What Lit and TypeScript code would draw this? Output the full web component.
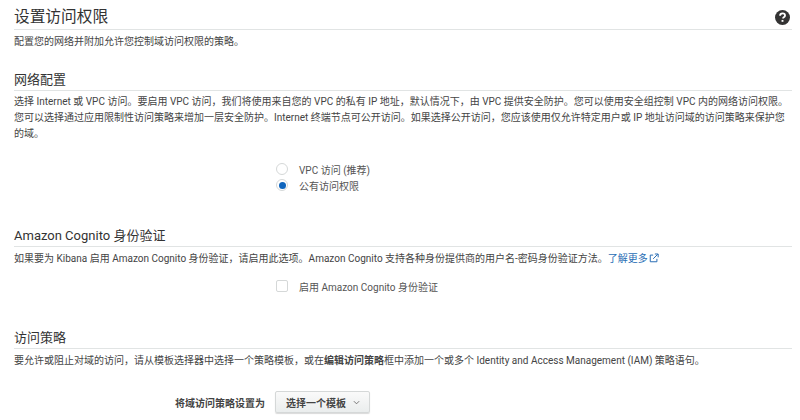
import { LitElement, html, css } from "lit";
import { customElement } from "lit/decorators.js";

@customElement("app-root")
export class AppRoot extends LitElement {
  static styles = css`
    :host { display: block; width: 800px; height: 420px; overflow: hidden; background: #fff; color: #444;
      font-family: Roboto, "Noto Sans CJK SC", sans-serif; font-size: 10px; }
    .page { padding: 0 8px 0 14px; }
    .head { display: flex; justify-content: space-between; align-items: center; border-bottom: 1px solid #e1e4e4; padding-top: 5px; box-sizing: border-box; height: 30px; }
    h1 { margin: 0; font-size: 15.7px; font-weight: 400; color: #333; line-height: 24px; }
    .help { width: 15px; height: 15px; margin-right: 2px; display: block; }
    p { margin: 0; line-height: 16px; color: #444; }
    .intro { margin-top: 4px; height: 15px; }
    h2 { margin: 0; font-size: 13px; font-weight: 400; color: #333; line-height: 20px; padding-top: 1px; border-bottom: 1px solid #e1e4e4; }
    .net { margin-top: 20px; }
    .net p { margin-top: 3px; margin-bottom: -1px; }
    .options { margin: 20px 0 0 261px; display: flex; flex-direction: column; }
    .opt { display: flex; align-items: center; height: 16px; gap: 11px; color: #555; }
    .radio { width: 12px; height: 12px; box-sizing: border-box; border-radius: 50%; border: 1px solid #d5d8d8; background: #fff; display: flex; align-items: center; justify-content: center; margin-left: 1px; }
    .radio i { width: 7px; height: 7px; border-radius: 50%; background: #0f65bd; display: block; }
    .cog { margin-top: 32px; }
    .cog p { margin-top: 4px; margin-bottom: -1px; }
    a { color: #2a6eb5; text-decoration: none; }
    .ext { width: 10px; height: 10px; vertical-align: -1px; margin-left: 1px; }
    .check { margin: 12px 0 0 262px; display: flex; align-items: center; gap: 11px; height: 16px; color: #555; }
    .box { width: 12px; height: 12px; box-sizing: border-box; border: 1px solid #d5d8d8; border-radius: 2px; background: #fff; }
    .pol { margin-top: 33px; }
    .pol p { margin-top: 4px; margin-bottom: -1px; }
    .row { margin-top: 23px; display: flex; align-items: center; padding-left: 160px; gap: 10px; }
    .row label { font-weight: 700; width: 91px; text-align: right; color: #444; }
    .btn { width: 95px; height: 22px; box-sizing: border-box; border: 1px solid #d5d8d8; border-radius: 2px; background: linear-gradient(#fafafa, #eaeded); box-shadow: 0 1px 1px rgba(0,0,0,.15); font: 700 10px Roboto, "Noto Sans CJK SC", sans-serif; color: #444; display: flex; align-items: center; gap: 7px; padding: 0 0 0 10px; }
    .btn svg { width: 7px; height: 5px; }
    b { font-weight: 700; }
  `;

  render() {
    return html`<div class="page">
      <div class="head">
        <h1>设置访问权限</h1>
        <svg class="help" viewBox="0 0 16 16"><circle cx="8" cy="8" r="8" fill="#333"/><path d="M5.4 6.2c0-1.6 1.1-2.6 2.7-2.6s2.6.9 2.6 2.2c0 1-.5 1.5-1.3 2-.6.4-.8.7-.8 1.3" fill="none" stroke="#fff" stroke-width="1.9"/><rect x="7" y="10.6" width="2" height="2" fill="#fff"/></svg>
      </div>
      <p class="intro">配置您的网络并附加允许您控制域访问权限的策略。</p>

      <section class="net">
        <h2>网络配置</h2>
        <p>选择 Internet 或 VPC 访问。要启用 VPC 访问，我们将使用来自您的 VPC 的私有 IP 地址，默认情况下，由 VPC 提供安全防护。您可以使用安全组控制 VPC 内的网络访问权限。<br>您可以选择通过应用限制性访问策略来增加一层安全防护。Internet 终端节点可公开访问。如果选择公开访问，您应该使用仅允许特定用户或 IP 地址访问域的访问策略来保护您<br>的域。</p>
        <div class="options">
          <div class="opt"><span class="radio"></span><span>VPC 访问 (推荐)</span></div>
          <div class="opt"><span class="radio"><i></i></span><span>公有访问权限</span></div>
        </div>
      </section>

      <section class="cog">
        <h2>Amazon Cognito 身份验证</h2>
        <p>如果要为 Kibana 启用 Amazon Cognito 身份验证，请启用此选项。Amazon Cognito 支持各种身份提供商的用户名-密码身份验证方法。<a href="#">了解更多<svg class="ext" viewBox="0 0 12 12" fill="none" stroke="#2a6eb5" stroke-width="1.2"><path d="M9.5 7v3.5h-8v-8H5"/><path d="M5 7l5.5-5.5M7 1.2h4v4"/></svg></a></p>
        <div class="check"><span class="box"></span><span>启用 Amazon Cognito 身份验证</span></div>
      </section>

      <section class="pol">
        <h2>访问策略</h2>
        <p>要允许或阻止对域的访问，请从模板选择器中选择一个策略模板，或在<b>编辑访问策略</b>框中添加一个或多个 Identity and Access Management (IAM) 策略语句。</p>
        <div class="row">
          <label>将域访问策略设置为</label>
          <button class="btn">选择一个模板<svg viewBox="0 0 8 5" fill="none" stroke="#666" stroke-width="1"><path d="M1 1l3 3 3-3"/></svg></button>
        </div>
      </section>
    </div>`;
  }
}
